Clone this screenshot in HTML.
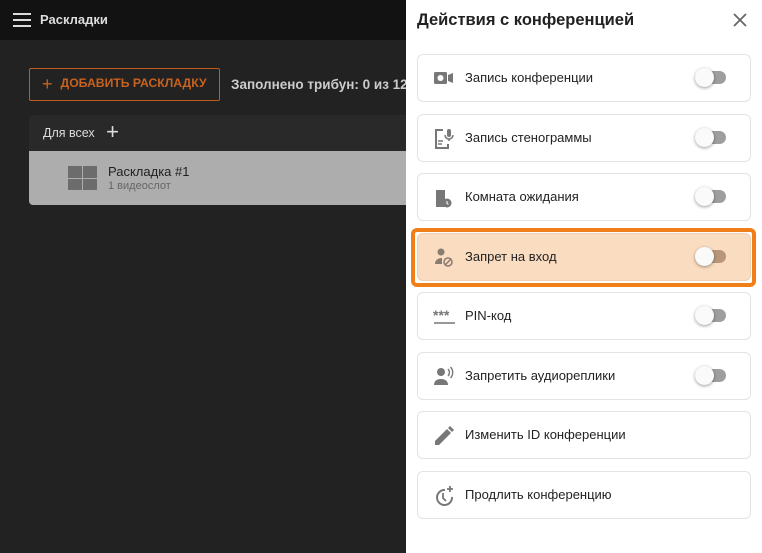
<!DOCTYPE html>
<html><head><meta charset="utf-8"><style>
*{box-sizing:border-box;margin:0;padding:0}
body{width:762px;height:553px;overflow:hidden;background:#222;font-family:"Liberation Sans",sans-serif;position:relative}
.hdr{position:absolute;left:0;top:0;width:762px;height:40px;background:#121212}
.ham{position:absolute;left:13px;top:13px;width:18px;height:14px}
.ham i{display:block;height:2px;background:#ddd;margin-bottom:4px}
.title{position:absolute;left:40px;top:12px;color:#ddd;font-size:13px;font-weight:bold}
.btn{position:absolute;left:29px;top:68px;width:191px;height:33px;border:1px solid #c15a1c;border-radius:2px;color:#c8621f;font-size:12.2px;font-weight:bold;display:flex;align-items:center;padding:0 0 2px 12px;line-height:1}
.btn b{font-size:18px;margin-right:8px;font-weight:normal;line-height:1}
.fill{position:absolute;left:231px;top:77px;color:#ccc;font-size:13.5px;font-weight:bold;white-space:nowrap}
.lay{position:absolute;left:29px;top:115px;width:400px;height:90px;border-radius:4px;overflow:hidden}
.lh{height:36px;background:#292929;color:#ddd;font-size:12.5px;padding:11px 0 0 14px}
.lr{height:54px;background:#adadad;position:relative}
.grid{position:absolute;left:39px;top:15px;width:29px;height:24px;display:grid;grid-template-columns:14px 14px;gap:1px}
.grid i{background:#6c6c6c}
.ln{position:absolute;left:79px;top:13px;font-size:13px;color:#222}
.ls{position:absolute;left:79px;top:29px;font-size:11px;color:#666}
.panel{position:absolute;left:406px;top:0;width:356px;height:553px;background:#fff}
.pt{position:absolute;left:11px;top:11px;font-size:16.5px;font-weight:bold;color:#222}
.x{position:absolute;left:327px;top:13px}
.card{position:absolute;left:11px;width:334px;height:48px;border:1px solid #e3e3e3;border-radius:6px;background:#fff}
.card .t{position:absolute;left:47px;top:15px;font-size:13px;color:#222}
.card svg.ic{position:absolute;left:15px;top:13px}
.sw{position:absolute;left:281px;top:16px;width:27px;height:13px;border-radius:7px;background:#9e9e9e}
.sw:before{content:"";position:absolute;left:-4px;top:-3px;width:19px;height:19px;border-radius:50%;background:#fafafa;box-shadow:0 1px 3px rgba(0,0,0,.4)}
.hl{background:#fadcc0;border-color:#f0cfb3}
.hl .sw{background:#b8967a}
.ring{position:absolute;left:5px;top:228px;width:345px;height:59px;border:4px solid #f07f1a;border-radius:6px}
</style></head><body>
<div class="hdr"><div class="ham"><i></i><i></i><i></i></div><div class="title">Раскладки</div></div>
<div class="btn"><b>+</b>ДОБАВИТЬ РАСКЛАДКУ</div>
<div class="fill">Заполнено трибун: 0 из 12</div>
<div class="lay"><div class="lh">Для всех <span style="font-size:22px;font-weight:normal;margin-left:8px;position:relative;top:2px;line-height:0">+</span></div>
<div class="lr"><div class="grid"><i></i><i></i><i></i><i></i></div><div class="ln">Раскладка #1</div><div class="ls">1 видеослот</div></div></div>
<div class="panel">
<div class="pt">Действия с конференцией</div>
<svg class="x" width="14" height="14" viewBox="0 0 14 14"><path d="M1 1L13 13M13 1L1 13" stroke="#666" stroke-width="1.8"/></svg>
<div class="card" style="top:54px"><svg class="ic" width="22" height="20" viewBox="0 0 22 20"><rect x="1" y="4" width="13" height="12" rx="1.5" fill="#777"/><circle cx="7.5" cy="10" r="3" fill="#fff"/><path d="M15 7l5-2v10l-5-2z" fill="#777"/></svg><div class="t">Запись конференции</div><div class="sw"></div></div>
<div class="card" style="top:114px"><svg class="ic" width="22" height="22" viewBox="0 0 22 22"><path d="M10 2H3v18h12v-4" stroke="#777" stroke-width="2" fill="none"/><path d="M5 13h5M5 16h4" stroke="#777" stroke-width="1.6"/><rect x="14" y="1" width="4" height="8" rx="2" fill="#777"/><path d="M12 7a4 4 0 008 0M16 11v2" stroke="#777" stroke-width="1.5" fill="none"/></svg><div class="t">Запись стенограммы</div><div class="sw"></div></div>
<div class="card" style="top:173px"><svg class="ic" width="22" height="22" viewBox="0 0 22 22"><path d="M3 3h9v17H3z" fill="#777"/><circle cx="14" cy="16" r="4.5" fill="#777"/><path d="M14 14v2.3l1.5 1" stroke="#fff" stroke-width="1" fill="none"/></svg><div class="t">Комната ожидания</div><div class="sw"></div></div>
<div class="card hl" style="top:233px"><svg class="ic" width="22" height="22" viewBox="0 0 22 22"><circle cx="8" cy="5" r="3.5" fill="#8a7b70"/><path d="M2 17c0-4 3-6 7-6v6z" fill="#8a7b70"/><circle cx="15" cy="15" r="4" stroke="#8a7b70" stroke-width="1.5" fill="none"/><path d="M12.5 17.5l5-5" stroke="#8a7b70" stroke-width="1.5"/></svg><div class="t">Запрет на вход</div><div class="sw"></div></div>
<div class="ring"></div>
<div class="card" style="top:292px"><svg class="ic" width="24" height="22" viewBox="0 0 24 22"><text x="0" y="14" font-size="14" font-weight="bold" fill="#777" font-family="Liberation Sans">***</text><path d="M1 17h21" stroke="#777" stroke-width="1.5"/></svg><div class="t">PIN-код</div><div class="sw"></div></div>
<div class="card" style="top:352px"><svg class="ic" width="22" height="22" viewBox="0 0 22 22"><circle cx="8" cy="6" r="4" fill="#777"/><path d="M1 19c0-4 3-6 7-6s7 2 7 6z" fill="#777"/><path d="M15 3a5 5 0 010 7M17.5 1a8 8 0 010 11" stroke="#777" stroke-width="1.4" fill="none"/></svg><div class="t">Запретить аудиореплики</div><div class="sw"></div></div>
<div class="card" style="top:411px"><svg class="ic" width="22" height="22" viewBox="0 0 22 22"><path d="M2 20v-4L14 4l4 4L6 20z" fill="#777"/><path d="M15 3l2-2 4 4-2 2z" fill="#777"/></svg><div class="t">Изменить ID конференции</div></div>
<div class="card" style="top:471px"><svg class="ic" width="22" height="22" viewBox="0 0 22 22"><path d="M12 5a7.5 7.5 0 107 7" stroke="#777" stroke-width="2" fill="none"/><path d="M10 8v5l3 3" stroke="#777" stroke-width="1.8" fill="none"/><path d="M17 1v6M14 4h6" stroke="#777" stroke-width="1.8"/></svg><div class="t">Продлить конференцию</div></div>
</div>
</body></html>
